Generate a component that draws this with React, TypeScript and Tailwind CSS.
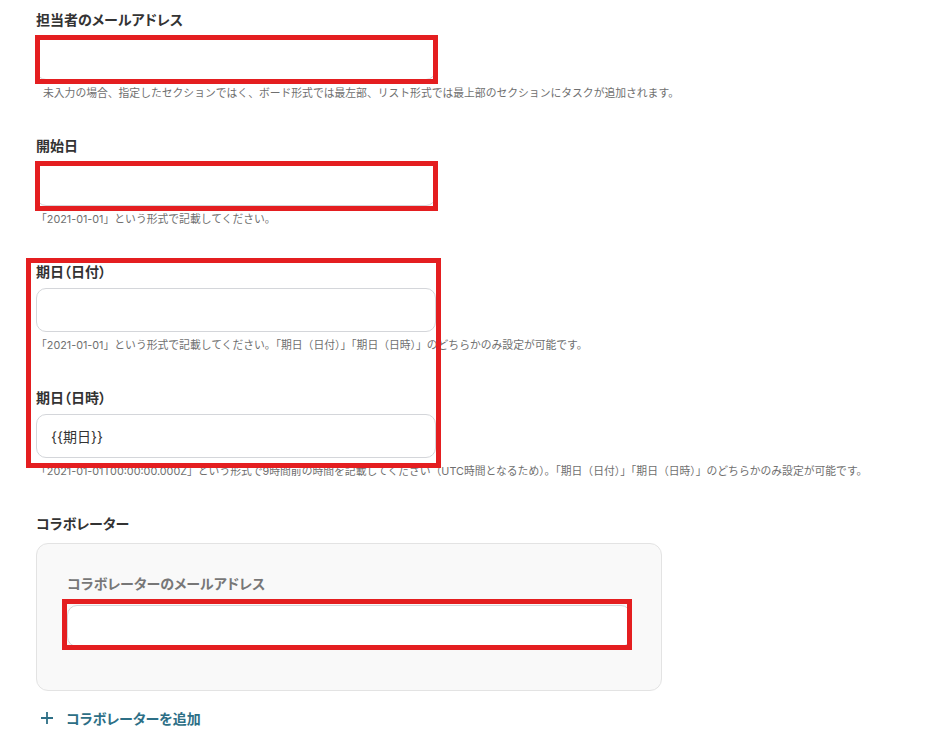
import React from "react";

const font = { fontFamily: 'Inter, "Noto Sans CJK JP", "Noto Sans", sans-serif' };

function Field({
  label,
  help,
  value,
  helpClass = "",
}: {
  label: string;
  help: string;
  value?: string;
  helpClass?: string;
}) {
  return (
    <div className="flex flex-col">
      <div className="h-5 text-[14px] leading-5 font-bold text-[#333333] [font-feature-settings:'palt']">{label}</div>
      <div className="mt-[6px] h-[44px] w-[400px] rounded-[10px] border border-[#d4d6da] bg-white flex items-center px-[14px] text-[14px] text-[#333333]">
        {value}
      </div>
      <div className={"mt-[6px] h-4 text-[10.8px] leading-4 text-[#6f6f6f] whitespace-nowrap " + helpClass}>{help}</div>
    </div>
  );
}

export default function App() {
  return (
    <div className="relative w-[932px] h-[743px] bg-white overflow-hidden" style={font}>
      <div className="flex flex-col gap-[34px] pl-[36px] pt-[10px]">
        <Field
          label="担当者のメールアドレス"
          help="未入力の場合、指定したセクションではく、ボード形式では最左部、リスト形式では最上部のセクションにタスクが追加されます。"
          helpClass="pl-[7px]"
        />
        <Field label="開始日" help="「2021-01-01」という形式で記載してください。" />
        <Field
          label="期日（日付）"
          help="「2021-01-01」という形式で記載してください。「期日（日付）」「期日（日時）」のどちらかのみ設定が可能です。"
        />
        <Field
          label="期日（日時）"
          value="{{期日}}"
          help="「2021-01-01T00:00:00.000Z」という形式で9時間前の時間を記載してください（UTC時間となるため）。「期日（日付）」「期日（日時）」のどちらかのみ設定が可能です。"
        />
      </div>
      <div className="flex flex-col pl-[36px] mt-[34px] [font-feature-settings:'palt']">
        <div className="h-5 text-[14px] leading-5 font-bold text-[#333333]">コラボレーター</div>
        <div className="mt-[9px] w-[626px] h-[148px] rounded-[12px] border border-[#e3e3e3] bg-[#f9f9f9] px-[30px] pt-[30px]">
          <div className="h-5 text-[14px] leading-5 font-bold text-[#777777]">コラボレーターのメールアドレス</div>
          <div className="mt-[11px] h-[42px] w-full rounded-[10px] border border-[#d4d6da] bg-white"></div>
        </div>
        <div className="mt-[17px] flex items-center h-5 text-[14px] font-bold text-[#2d6f86]">
          <svg width="14" height="14" viewBox="0 0 14 14" className="ml-[4px]">
            <path d="M7 1v12M1 7h12" stroke="#2d6f86" strokeWidth="1.8" />
          </svg>
          <span className="ml-[12px]">コラボレーターを追加</span>
        </div>
      </div>

      {/* annotation boxes */}
      <div className="absolute left-[35px] top-[35px] w-[403px] h-[49px] border-[5px] border-[#e41e20]"></div>
      <div className="absolute left-[35px] top-[161px] w-[403px] h-[50px] border-[5px] border-[#e41e20]"></div>
      <div className="absolute left-[26px] top-[258px] w-[415px] h-[210px] border-[5px] border-[#e41e20]"></div>
      <div className="absolute left-[62px] top-[599px] w-[570px] h-[51px] border-[5px] border-[#e41e20]"></div>
    </div>
  );
}
